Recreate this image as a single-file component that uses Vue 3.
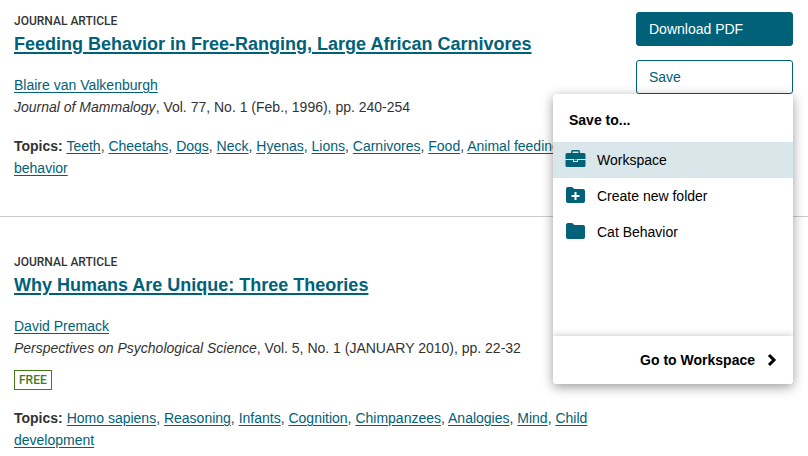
<script setup>
const articles = [
  {
    title: 'Feeding Behavior in Free-Ranging, Large African Carnivores',
    author: 'Blaire van Valkenburgh',
    journal: 'Journal of Mammalogy',
    issue: ', Vol. 77, No. 1 (Feb., 1996), pp. 240-254',
    free: false,
    topics: ['Teeth', 'Cheetahs', 'Dogs', 'Neck', 'Hyenas', 'Lions', 'Carnivores', 'Food', 'Animal feeding behavior'],
    actions: true
  },
  {
    title: 'Why Humans Are Unique: Three Theories',
    author: 'David Premack',
    journal: 'Perspectives on Psychological Science',
    issue: ', Vol. 5, No. 1 (JANUARY 2010), pp. 22-32',
    free: true,
    topics: ['Homo sapiens', 'Reasoning', 'Infants', 'Cognition', 'Chimpanzees', 'Analogies', 'Mind', 'Child development'],
    actions: false
  }
]

const folders = [
  { name: 'Workspace', icon: 'briefcase', active: true },
  { name: 'Create new folder', icon: 'plus', active: false },
  { name: 'Cat Behavior', icon: 'folder', active: false }
]
</script>

<template>
  <main class="results">
    <article v-for="article in articles" :key="article.title" class="result">
      <div class="info">
        <div class="kind">JOURNAL ARTICLE</div>
        <h2 class="title"><a href="#">{{ article.title }}</a></h2>
        <div class="meta">
          <div><a href="#">{{ article.author }}</a></div>
          <div><cite>{{ article.journal }}</cite>{{ article.issue }}</div>
        </div>
        <div v-if="article.free" class="badge">FREE</div>
        <div class="topics">
          <strong>Topics:</strong>{{ ' ' }}<template v-for="(topic, i) in article.topics" :key="topic"><a href="#">{{ topic }}</a>{{ i < article.topics.length - 1 ? ', ' : '' }}</template>
        </div>
      </div>

      <div v-if="article.actions" class="actions">
        <button type="button" class="button primary">Download PDF</button>
        <div class="save">
          <button type="button" class="button" aria-haspopup="true" aria-expanded="true">Save</button>
          <div class="menu">
            <div class="menu-heading">Save to...</div>
            <div class="menu-list">
              <button v-for="folder in folders" :key="folder.name" type="button" class="menu-item" :class="{ active: folder.active }">
                <svg v-if="folder.icon === 'briefcase'" class="icon" viewBox="0 0 21 20" aria-hidden="true">
                  <path fill-rule="evenodd" d="M6 3V1.500Q6 0 7.500 0H13.500Q15 0 15 1.500V3H19Q20.500 3 20.500 4.500V9H0.500V4.500Q0.500 3 2 3ZM7.500 3H13.500V1.500H7.500Z" />
                  <path d="M0.500 10H8V12H13V10H20.500V15.500Q20.500 17 19 17H2Q0.500 17 0.500 15.500Z" />
                  <path d="M9 9.500H12V11H9Z" />
                </svg>
                <svg v-else class="icon" viewBox="0 0 21 20" aria-hidden="true">
                  <path d="M1 3Q1 1 3 1H6.500Q7.500 1 8.100 1.800L9.200 3H18Q20 3 20 5V15Q20 17 18 17H3Q1 17 1 15Z" />
                  <path v-if="folder.icon === 'plus'" class="plus" d="M9.500 6H11.500V9H14.500V11H11.500V14H9.500V11H6.500V9H9.500Z" />
                </svg>
                <span>{{ folder.name }}</span>
              </button>
            </div>
            <a href="#" class="menu-footer">
              <span>Go to Workspace</span>
              <svg class="chevron" viewBox="0 0 10 14" aria-hidden="true"><path d="M2 2L7 7L2 12" /></svg>
            </a>
          </div>
        </div>
      </div>
    </article>
  </main>
</template>

<style>
body {
  background: #fff;
}
</style>

<style scoped>
.results {
  font-family: "Liberation Sans", Arial, sans-serif;
  font-size: 14px;
  line-height: 22px;
  color: #333;
}

.result {
  display: grid;
  grid-template-columns: minmax(0, 1fr) 157px;
  column-gap: 24px;
  padding: 36px 15px 37px 14px;
}

.result:first-child {
  padding-top: 12px;
}

.result:last-child {
  padding-bottom: 0;
}

.result + .result {
  border-top: 1px solid #ccc;
}

a {
  color: #006179;
  text-decoration: underline;
  text-underline-offset: 2px;
}

.kind {
  font-family: Roboto, sans-serif;
  font-size: 12px;
  font-weight: 500;
  line-height: 18px;
}

.title {
  margin: 0 0 16px;
  font-size: 18px;
  line-height: 28px;
}

.title a {
  text-decoration-thickness: 2px;
}

.topics {
  margin-top: 17px;
}

.badge {
  width: max-content;
  margin-top: 11px;
  padding: 0 4px;
  border: 1px solid #457a1c;
  color: #457a1c;
  font-family: Roboto, sans-serif;
  font-size: 12px;
  font-weight: 500;
  line-height: 18px;
}

.actions {
  display: flex;
  flex-direction: column;
  gap: 14px;
}

.button {
  display: block;
  width: 100%;
  height: 34px;
  padding: 0 12px;
  border: 1px solid #006179;
  border-radius: 3px;
  background: #fff;
  color: #006179;
  font: inherit;
  text-align: left;
}

.primary {
  background: #006179;
  color: #fff;
}

.save {
  position: relative;
}

.menu {
  position: absolute;
  z-index: 1;
  top: 100%;
  right: 0;
  display: flex;
  flex-direction: column;
  width: 240px;
  border-radius: 3px;
  background: #fff;
  box-shadow: 0 3px 12px rgba(0, 0, 0, 0.4);
  color: #000;
}

.menu-heading {
  padding: 15px 16px 11px;
  font-weight: 700;
}

.menu-list {
  min-height: 194px;
}

.menu-item {
  display: flex;
  align-items: center;
  gap: 11px;
  width: 100%;
  height: 36px;
  padding: 0 12px;
  border: 0;
  background: #fff;
  color: #000;
  font: inherit;
  text-align: left;
}

.active {
  background: #d9e6ea;
}

.icon {
  flex: none;
  width: 21px;
  height: 20px;
  fill: #006179;
}

.plus {
  fill: #fff;
}

.menu-footer {
  display: flex;
  align-items: center;
  justify-content: flex-end;
  gap: 12px;
  height: 48px;
  padding: 0 16px;
  border-radius: 0 0 3px 3px;
  background: #fff;
  box-shadow: 0 -1px 6px rgba(0, 0, 0, 0.2);
  clip-path: inset(-8px 0 0 0);
  color: #000;
  font-weight: 700;
  text-decoration: none;
}

.chevron {
  width: 10px;
  height: 14px;
  fill: none;
  stroke: #000;
  stroke-width: 3;
}
</style>
